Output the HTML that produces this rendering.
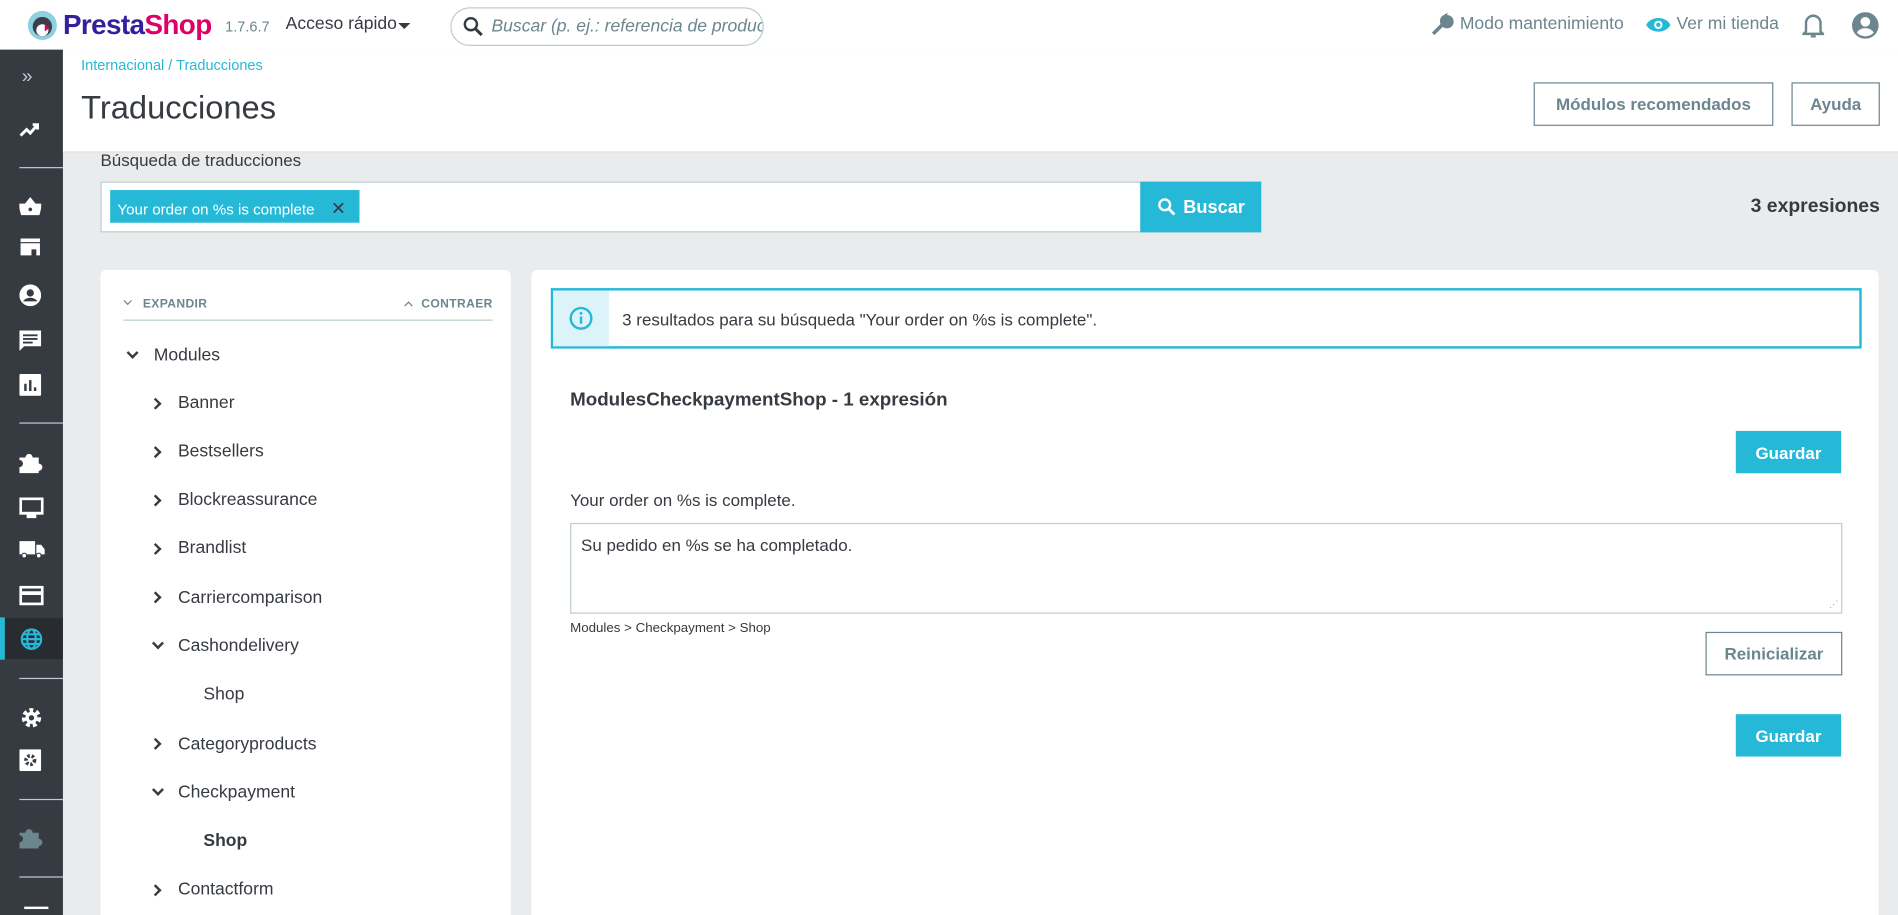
<!DOCTYPE html>
<html><head><meta charset="utf-8"><style>
*{box-sizing:border-box;margin:0;padding:0}
html,body{width:1898px;height:915px;overflow:hidden;background:#eaebec}
#w{width:1568px;height:756px;transform:scale(1.21046);transform-origin:0 0;position:relative;font-family:"Liberation Sans",sans-serif;color:#363a41;background:#eaebec}
.abs{position:absolute}
.hdr{left:0;top:0;width:1568px;height:41px;background:#fff}
.side{left:0;top:41px;width:52px;height:715px;background:#363a41}
.side .sep{position:absolute;left:16px;width:36px;height:1px;background:#bbcdd2}
.side svg{position:absolute;left:16px}
.ph{left:52px;top:41px;width:1516px;height:85px;background:#fff;border-bottom:1px solid #dfe3e6}
.btn-o{border:1px solid #6c868e;color:#6c868e;background:#fff;font-size:14px;font-weight:bold;display:flex;align-items:center;justify-content:center}
.btn-b{background:#25b9d7;color:#fff;font-size:14px;font-weight:bold;display:flex;align-items:center;justify-content:center}
.panel{background:#fff;border-radius:5px}
.tr{position:absolute;font-size:14.5px;color:#363a41}
.chev{position:absolute;width:7px;height:7px;border-right:2px solid #363a41;border-bottom:2px solid #363a41}
</style></head><body><div id="w">
<div class="abs hdr">
 <svg class="abs" style="left:22px;top:8px" width="26" height="26" viewBox="0 0 26 26"><circle cx="13" cy="13" r="12" fill="#8fd0e0"/><circle cx="13" cy="14" r="8" fill="#3a3f4a"/><circle cx="13" cy="17" r="5" fill="#fff"/><path d="M15 12l4 3-4 3z" fill="#df0067"/></svg>
 <div class="abs" style="left:52px;top:7px;font-size:23px;font-weight:bold;letter-spacing:-0.5px"><span style="color:#34209e">Presta</span><span style="color:#df0067">Shop</span></div>
 <div class="abs" style="left:186px;top:15px;font-size:12px;color:#6c868e">1.7.6.7</div>
 <div class="abs" style="left:236px;top:12px;font-size:14.5px;color:#363a41">Acceso rápido</div>
 <div class="abs" style="left:329px;top:19px;border:5px solid transparent;border-top-color:#363a41;border-bottom:0"></div>
 <div class="abs" style="left:372px;top:6px;width:259px;height:32px;border:1px solid #bbcdd2;border-radius:16px;overflow:hidden">
  <svg class="abs" style="left:9px;top:6px" width="18" height="18" viewBox="0 0 18 18"><circle cx="7" cy="7" r="5" fill="none" stroke="#363a41" stroke-width="2"/><path d="M11 11l5 5" stroke="#363a41" stroke-width="2.5"/></svg>
  <div class="abs" style="left:33px;top:7px;font-size:14.5px;font-style:italic;color:#6c868e;white-space:nowrap">Buscar (p. ej.: referencia de producto</div>
 </div>
 <svg class="abs" style="left:1181px;top:11px" width="20" height="20" viewBox="0 0 20 20"><path d="M3 17l8-8M11 9a4 4 0 1 0 4-6l-2 3-2-1 1-2a4 4 0 0 0-1 6" stroke="#6c868e" stroke-width="3" fill="#6c868e"/></svg>
 <div class="abs" style="left:1206px;top:12px;font-size:14.5px;color:#6c868e">Modo mantenimiento</div>
 <svg class="abs" style="left:1359px;top:13px" width="22" height="15" viewBox="0 0 22 15"><path d="M1 7.5C5 0 17 0 21 7.5 17 15 5 15 1 7.5z" fill="#25b9d7"/><circle cx="11" cy="7.5" r="3.5" fill="#fff"/><circle cx="11" cy="7.5" r="1.8" fill="#25b9d7"/></svg>
 <div class="abs" style="left:1385px;top:12px;font-size:14.5px;color:#6c868e">Ver mi tienda</div>
 <svg class="abs" style="left:1489px;top:10px" width="18" height="22" viewBox="0 0 18 22"><path d="M3 16V9a6 6 0 0 1 12 0v7l2 2H1z" fill="none" stroke="#6c868e" stroke-width="2"/><path d="M7 20h4" stroke="#6c868e" stroke-width="2"/></svg>
 <svg class="abs" style="left:1530px;top:10px" width="22" height="22" viewBox="0 0 22 22"><circle cx="11" cy="11" r="11" fill="#6c868e"/><circle cx="11" cy="8" r="4" fill="#fff"/><path d="M4 17c3-5 11-5 14 0-4 4-10 4-14 0z" fill="#fff"/></svg>
</div>
<div class="abs side">
 <div class="abs" style="left:18px;top:14px;color:#bbcdd2;font-size:16px">»</div>
 <svg style="top:59px" width="18" height="14" viewBox="0 0 18 14"><path d="M1 12l5-5 3 3 6-7M11 3h4v4" stroke="#fff" stroke-width="2.4" fill="none"/></svg>
 <div class="sep" style="top:97px"></div>
 <svg style="top:122px" width="18" height="16" viewBox="0 0 18 16"><path d="M0 6h18l-2 8H2z M5 6l4-5 4 5" fill="#fff" stroke="#fff" stroke-width="1.5"/><circle cx="9" cy="10" r="1.5" fill="#363a41"/></svg>
 <svg style="top:155px" width="18" height="16" viewBox="0 0 18 16"><path d="M1 1h16v3H1zM1 5h16v10h-3v-5h-4v5H1z" fill="#fff"/></svg>
 <svg style="top:194px" width="18" height="18" viewBox="0 0 18 18"><circle cx="9" cy="9" r="9" fill="#fff"/><circle cx="9" cy="7" r="3" fill="#363a41"/><path d="M3 14c3-4 9-4 12 0z" fill="#363a41"/></svg>
 <svg style="top:232px" width="18" height="18" viewBox="0 0 18 18"><path d="M0 0h18v13H4l-4 4z" fill="#fff"/><path d="M3 4h12M3 7h12M3 10h8" stroke="#363a41" stroke-width="1.5"/></svg>
 <svg style="top:268px" width="18" height="18" viewBox="0 0 18 18"><rect width="18" height="18" rx="1" fill="#fff"/><path d="M5 14V8M9 14V5M13 14v-3" stroke="#363a41" stroke-width="2"/></svg>
 <div class="sep" style="top:308px"></div>
 <svg style="top:332px" width="20" height="18" viewBox="0 0 20 18"><path d="M0 5h5a3 3 0 0 1 6 0h5v5a3 3 0 0 1 0 6v2H0v-5a3 3 0 0 0 0-6z" fill="#fff"/></svg>
 <svg style="top:370px" width="20" height="18" viewBox="0 0 20 18"><rect x="1" y="1" width="18" height="12" fill="none" stroke="#fff" stroke-width="2.4"/><path d="M6 17h8v-3H6z" fill="#fff"/></svg>
 <svg style="top:405px" width="21" height="16" viewBox="0 0 21 16"><path d="M0 1h13v11H0zM14 4h4l3 4v4h-7z" fill="#fff"/><circle cx="4" cy="13" r="2" fill="#fff" stroke="#363a41"/><circle cx="16" cy="13" r="2" fill="#fff" stroke="#363a41"/></svg>
 <svg style="top:443px" width="20" height="16" viewBox="0 0 20 16"><rect x="1" y="1" width="18" height="14" fill="none" stroke="#fff" stroke-width="2.4"/><path d="M1 6h18" stroke="#fff" stroke-width="3"/></svg>
 <div class="abs" style="left:0;top:469px;width:52px;height:35px;background:#25b9d7"></div>
 <div class="abs" style="left:4px;top:469px;width:48px;height:35px;background:#282b30"></div>
 <svg style="top:478px;left:17px" width="18" height="18" viewBox="0 0 18 18"><g fill="none" stroke="#25b9d7" stroke-width="1.8"><circle cx="9" cy="9" r="8"/><ellipse cx="9" cy="9" rx="3.5" ry="8"/><path d="M1 9h16M2 5h14M2 13h14"/></g></svg>
 <div class="sep" style="top:519px"></div>
 <svg style="top:542px" width="20" height="20" viewBox="0 0 20 20"><circle cx="10" cy="10" r="6" fill="none" stroke="#fff" stroke-width="4" stroke-dasharray="3 2.3"/><circle cx="10" cy="10" r="5" fill="#fff"/><circle cx="10" cy="10" r="2.2" fill="#363a41"/></svg>
 <svg style="top:578px" width="18" height="18" viewBox="0 0 18 18"><rect width="18" height="18" rx="1" fill="#fff"/><circle cx="9" cy="9" r="3.5" fill="none" stroke="#363a41" stroke-width="3" stroke-dasharray="2 1.5"/></svg>
 <div class="sep" style="top:619px"></div>
 <svg style="top:642px" width="20" height="18" viewBox="0 0 20 18"><path d="M0 5h5a3 3 0 0 1 6 0h5v5a3 3 0 0 1 0 6v2H0v-5a3 3 0 0 0 0-6z" fill="#6c868e"/></svg>
 <div class="sep" style="top:683px"></div>
 <div class="abs" style="left:20px;top:708px;width:20px;height:2px;background:#fff"></div>
</div>
<div class="abs ph">
 <div class="abs" style="left:15px;top:6px;font-size:12px;color:#25b9d7">Internacional / Traducciones</div>
 <div class="abs" style="left:15px;top:33px;font-size:27px;color:#363a41">Traducciones</div>
 <div class="abs btn-o" style="left:1215px;top:27px;width:198px;height:36px">Módulos recomendados</div>
 <div class="abs btn-o" style="left:1428px;top:27px;width:73px;height:36px">Ayuda</div>
</div>
<div class="abs" style="left:83px;top:124px;font-size:14px;color:#363a41">Búsqueda de traducciones</div>
<div class="abs" style="left:83px;top:150px;width:860px;height:42px;background:#fff;border:1px solid #bbcdd2"></div>
<div class="abs" style="left:91px;top:157px;width:206px;height:27px;background:#25b9d7;color:#fff;font-size:12.5px;padding:6px 6px;white-space:nowrap">Your order on %s is complete <span style="margin-left:10px;color:#363a41;font-size:15px">✕</span></div>
<div class="abs btn-b" style="left:942px;top:150px;width:100px;height:42px;font-size:15px"><svg width="16" height="16" viewBox="0 0 18 18" style="margin-right:6px"><circle cx="7" cy="7" r="5" fill="none" stroke="#fff" stroke-width="2.2"/><path d="M11 11l5 5" stroke="#fff" stroke-width="2.6"/></svg>Buscar</div>
<div class="abs" style="right:15px;top:162px;font-size:16px;font-weight:bold;color:#363a41">3 expresiones</div>
<div class="abs panel" style="left:83px;top:223px;width:339px;height:560px">
 <div class="chev" style="left:20px;top:23px;transform:rotate(45deg);width:5px;height:5px;border-width:1.5px;border-color:#6c868e"></div>
 <div class="abs" style="left:35px;top:23px;font-size:10px;font-weight:bold;color:#6c868e;letter-spacing:.3px">EXPANDIR</div>
 <div class="chev" style="left:252px;top:27px;transform:rotate(-135deg);width:5px;height:5px;border-width:1.5px;border-color:#6c868e"></div>
 <div class="abs" style="left:265px;top:23px;font-size:10px;font-weight:bold;color:#6c868e;letter-spacing:.3px">CONTRAER</div>
 <div class="abs" style="left:19px;top:41px;width:305px;height:1px;background:#bbcdd2"></div>
</div>
<div class="chev" style="left:106px;top:288px;transform:rotate(45deg)"></div><div class="tr" style="left:127px;top:286px">Modules</div>
<div class="chev" style="left:125px;top:330px;transform:rotate(-45deg)"></div><div class="tr" style="left:147px;top:325px">Banner</div>
<div class="chev" style="left:125px;top:370px;transform:rotate(-45deg)"></div><div class="tr" style="left:147px;top:365px">Bestsellers</div>
<div class="chev" style="left:125px;top:410px;transform:rotate(-45deg)"></div><div class="tr" style="left:147px;top:405px">Blockreassurance</div>
<div class="chev" style="left:125px;top:450px;transform:rotate(-45deg)"></div><div class="tr" style="left:147px;top:445px">Brandlist</div>
<div class="chev" style="left:125px;top:490px;transform:rotate(-45deg)"></div><div class="tr" style="left:147px;top:486px">Carriercomparison</div>
<div class="chev" style="left:127px;top:528px;transform:rotate(45deg)"></div><div class="tr" style="left:147px;top:526px">Cashondelivery</div>
<div class="tr" style="left:168px;top:566px">Shop</div>
<div class="chev" style="left:125px;top:611px;transform:rotate(-45deg)"></div><div class="tr" style="left:147px;top:607px">Categoryproducts</div>
<div class="chev" style="left:127px;top:649px;transform:rotate(45deg)"></div><div class="tr" style="left:147px;top:647px">Checkpayment</div>
<div class="tr" style="left:168px;top:687px;font-weight:bold">Shop</div>
<div class="chev" style="left:125px;top:732px;transform:rotate(-45deg)"></div><div class="tr" style="left:147px;top:727px">Contactform</div>
<div class="abs panel" style="left:439px;top:223px;width:1113px;height:560px">
 <div class="abs" style="left:16px;top:15px;width:1083px;height:50px;border:2px solid #25b9d7">
  <div class="abs" style="left:0;top:0;width:46px;height:46px;background:#dcf4f9"></div>
  <svg class="abs" style="left:13px;top:13px" width="20" height="20" viewBox="0 0 20 20"><circle cx="10" cy="10" r="8.5" fill="none" stroke="#25b9d7" stroke-width="2"/><path d="M10 8.5v6" stroke="#25b9d7" stroke-width="2"/><circle cx="10" cy="5.8" r="1.2" fill="#25b9d7"/></svg>
  <div class="abs" style="left:57px;top:16px;font-size:14px;color:#363a41;white-space:nowrap">3 resultados para su búsqueda "Your order on %s is complete".</div>
 </div>
 <div class="abs" style="left:32px;top:99px;font-size:15.5px;font-weight:bold">ModulesCheckpaymentShop - 1 expresión</div>
 <div class="abs btn-b" style="left:995px;top:133px;width:87px;height:35px">Guardar</div>
 <div class="abs" style="left:32px;top:182px;font-size:14px">Your order on %s is complete.</div>
 <div class="abs" style="left:32px;top:209px;width:1051px;height:75px;border:1px solid #bbcdd2;padding:9px 8px;font-size:14px">Su pedido en %s se ha completado.<div class="abs" style="right:2px;bottom:2px;color:#999;font-size:8px">⋰</div></div>
 <div class="abs" style="left:32px;top:290px;font-size:11px">Modules &gt; Checkpayment &gt; Shop</div>
 <div class="abs btn-o" style="left:970px;top:299px;width:113px;height:36px">Reinicializar</div>
 <div class="abs btn-b" style="left:995px;top:367px;width:87px;height:35px">Guardar</div>
</div>
</div></body></html>
